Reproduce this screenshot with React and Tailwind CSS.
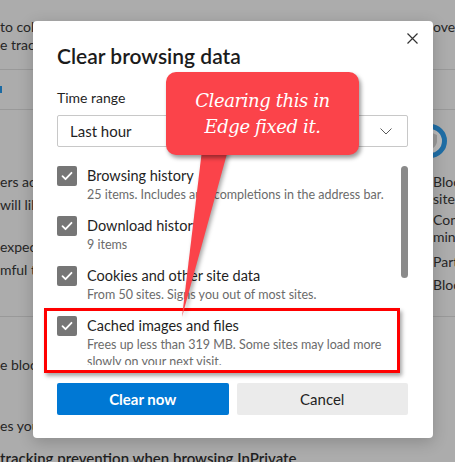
import React from 'react';

const sans = { fontFamily: 'Lato, "Noto Sans", sans-serif' };

function Check() {
  return (
    <div className="w-[20px] h-[20px] rounded-[2px] bg-[#767676] flex items-center justify-center shrink-0">
      <svg width="14" height="14" viewBox="0 0 14 14" fill="none">
        <path d="M2.5 7.2l3 3L11.5 3.8" stroke="#fff" strokeWidth="1.8" strokeLinecap="round" strokeLinejoin="round" />
      </svg>
    </div>
  );
}

function Item({ title, children }) {
  return (
    <div className="flex gap-[10px] mb-[13px]">
      <Check />
      <div className="whitespace-nowrap">
        <div className="text-[14.5px] leading-[20px] text-[#1f1f1f]">{title}</div>
        <div className="text-[12.5px] leading-[17px] text-[#6b6b6b]">{children}</div>
      </div>
    </div>
  );
}

function Background() {
  return (
    <div className="w-full h-full bg-[#acacac] text-[#262626] text-[14px] overflow-hidden">
      {/* top paragraph */}
      <div className="h-[70px] border-b border-[#999] grid grid-cols-[433px_1fr] pt-[18px] leading-[18px]">
        <div className="whitespace-nowrap overflow-hidden">
          <div>to collect info about your browsing to help improve</div>
          <div>e tracking</div>
        </div>
        <div className="whitespace-nowrap overflow-hidden">ove</div>
      </div>
      {/* link row */}
      <div className="h-[40px] border-b border-[#999] flex items-center">
        <span className="w-[2px] h-[7px] bg-[#1a6aa3]" />
      </div>
      {/* levels */}
      <div className="h-[207px] border-b border-[#999] grid grid-cols-[433px_1fr]">
        <div className="whitespace-nowrap overflow-hidden leading-[23px] pt-[60px]">
          <div>ers across sites</div>
          <div>will likely work</div>
          <div className="mt-[19px]">expected</div>
          <div>mful trackers</div>
        </div>
        <div className="whitespace-nowrap leading-[17px] min-w-0">
          <div className="-ml-[20px] mt-[14px] w-[34px] h-[34px]">
            <svg width="34" height="34" viewBox="0 0 34 34">
              <circle cx="17" cy="17" r="14.5" fill="#bdbdbd" stroke="#1f6ea6" strokeWidth="5" />
              <path d="M17 8l7 3v6c0 4-3 7-7 9-4-2-7-5-7-9v-6z" fill="#9a9a9a" />
            </svg>
          </div>
          <div className="overflow-hidden">
            <div className="mt-[15px]">Block</div>
            <div>sites</div>
            <div className="mt-[4px]">Cont</div>
            <div>mini</div>
            <div className="mt-[8px]">Parts</div>
            <div className="mt-[6px]">Block</div>
          </div>
        </div>
      </div>
      <div className="whitespace-nowrap">
        <div className="mt-[38px] leading-[20px]">e blocked</div>
        <div className="mt-[41px] leading-[20px]">es you visit</div>
        <div className="mt-[11px] leading-[22px] text-[15px] font-semibold text-[#1f1f1f]">tracking prevention when browsing InPrivate</div>
      </div>
    </div>
  );
}

export default function App() {
  return (
    <div className="relative w-[455px] h-[462px] overflow-hidden" style={sans}>
      <Background />

      {/* dialog */}
      <div className="absolute left-[33px] top-[21px] w-[400px] h-[417px] bg-white rounded-[4px] shadow-[0_4px_16px_rgba(0,0,0,0.2)] pl-[24px] pr-[25px] pt-[21px]">
        <button className="absolute left-[374px] top-[12px] w-[11px] h-[11px]">
          <svg width="11" height="11" viewBox="0 0 11 11">
            <path d="M0.5 0.5l10 10M10.5 0.5l-10 10" stroke="#333" strokeWidth="1.2" />
          </svg>
        </button>

        <h1 className="text-[21px] leading-[28px] font-semibold text-[#1b1b1b]">Clear browsing data</h1>

        <div className="mt-[18px] text-[14px] leading-[20px] text-[#1f1f1f]">Time range</div>

        <div className="mt-[7px] h-[32px] border border-[#c8c8c8] rounded-[2px] flex items-center justify-between pl-[12px] pr-[15px]">
          <span className="text-[15px] text-[#1f1f1f]">Last hour</span>
          <svg width="12" height="7" viewBox="0 0 12 7" fill="none">
            <path d="M0.5 0.5L6 6l5.5-5.5" stroke="#5a5a5a" strokeWidth="1" />
          </svg>
        </div>

        <div className="relative mt-[6px] h-[212px] overflow-hidden pt-[13px]">
          <Item title="Browsing history">25 items. Includes autocompletions in the address bar.</Item>
          <Item title="Download history">9 items</Item>
          <Item title="Cookies and other site data">From 50 sites. Signs you out of most sites.</Item>
          <Item title="Cached images and files">
            Frees up less than 319 MB. Some sites may load more
            <br />
            slowly on your next visit.
          </Item>
          <Item title="Hosted app data">1 app: Microsoft Store.</Item>
          <div className="absolute right-0 top-[13px] w-[7px] h-[112px] rounded-full bg-[#8a8a8a]" />
        </div>

        <div className="mt-[18px] flex gap-[8px]">
          <button className="flex-1 h-[32px] bg-[#0078d4] text-white text-[15px] font-bold rounded-[2px]">Clear now</button>
          <button className="flex-1 h-[32px] bg-[#ebebeb] text-[#1f1f1f] text-[15px] rounded-[2px]">Cancel</button>
        </div>
      </div>

      {/* highlight annotation */}
      <div className="absolute left-[44px] top-[308px] w-[356px] h-[65px] border-[3px] border-[#ff0000] shadow-[2px_3px_4px_rgba(0,0,0,0.35)]" />

      {/* callout annotation */}
      <svg className="absolute left-0 top-0 drop-shadow-[2px_2px_2px_rgba(0,0,0,0.35)]" width="455" height="462">
        <polygon points="202,150 228,150 182,317" fill="#fb434a" />
      </svg>
      <div
        className="absolute left-[166px] top-[72px] w-[193px] h-[83px] rounded-[10px] bg-[#fb434a] shadow-[2px_3px_4px_rgba(0,0,0,0.4)] flex flex-col items-center justify-center text-white italic text-[18px] leading-[26px] tracking-[-0.4px]"
        style={{ fontFamily: '"DejaVu Serif", serif' }}
      >
        <div>Clearing this in</div>
        <div>Edge fixed it.</div>
      </div>
    </div>
  );
}
